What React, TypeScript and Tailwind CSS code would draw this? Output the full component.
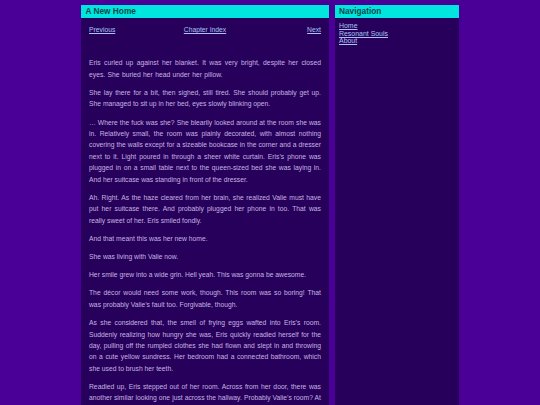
const paragraphs = [
  "Eris curled up against her blanket. It was very bright, despite her closed eyes. She buried her head under her pillow.",
  "She lay there for a bit, then sighed, still tired. She should probably get up. She managed to sit up in her bed, eyes slowly blinking open.",
  "… Where the fuck was she? She blearily looked around at the room she was in. Relatively small, the room was plainly decorated, with almost nothing covering the walls except for a sizeable bookcase in the corner and a dresser next to it. Light poured in through a sheer white curtain. Eris’s phone was plugged in on a small table next to the queen-sized bed she was laying in. And her suitcase was standing in front of the dresser.",
  "Ah. Right. As the haze cleared from her brain, she realized Valie must have put her suitcase there. And probably plugged her phone in too. That was really sweet of her. Eris smiled fondly.",
  "And that meant this was her new home.",
  "She was living with Valie now.",
  "Her smile grew into a wide grin. Hell yeah. This was gonna be awesome.",
  "The décor would need some work, though. This room was so boring! That was probably Valie’s fault too. Forgivable, though.",
  "As she considered that, the smell of frying eggs wafted into Eris’s room. Suddenly realizing how hungry she was, Eris quickly readied herself for the day, pulling off the rumpled clothes she had flown and slept in and throwing on a cute yellow sundress. Her bedroom had a connected bathroom, which she used to brush her teeth.",
  "Readied up, Eris stepped out of her room. Across from her door, there was another similar looking one just across the hallway. Probably Valie’s room? At the end of the hallway, she could hear sizzling coming from the kitchen.",
];

const navLinks = ["Home", "Resonant Souls", "About"];

export default function App() {
  return (
    <div className="h-[405px] overflow-hidden bg-[#4a0096] pt-[5px] font-['Liberation_Sans',Arial,sans-serif]">
      <div className="flex h-full items-stretch gap-[6px] pl-[81px]">
        <main className="w-[248px] bg-[#26005a]">
          <h1 className="h-[13px] bg-[#00e5de] pl-[4.5px] text-[8.3px] font-bold leading-[13px] text-[#0a4a48]">
            A New Home
          </h1>
          <div className="px-[8px] pt-[6px] text-[6.76px] leading-[11.4px] text-[#c6b4e2]">
            <div className="grid grid-cols-3 text-[#a8c4f4]">
              <a href="#" className="text-left underline">Previous</a>
              <a href="#" className="text-center underline">Chapter Index</a>
              <a href="#" className="text-right underline">Next</a>
            </div>
            <div className="mt-[22px]">
              {paragraphs.map((p, i) => (
                <p
                  key={i}
                  className={
                    i === 0
                      ? "mb-[6.8px] text-justify [word-spacing:0.5px]"
                      : "mb-[6.8px] text-justify"
                  }
                >
                  {p}
                </p>
              ))}
            </div>
          </div>
        </main>

        <aside className="w-[124px] bg-[#26005a]">
          <h2 className="h-[13px] bg-[#00e5de] pl-[4px] text-[8.3px] font-bold leading-[13px] text-[#0a4a48]">
            Navigation
          </h2>
          <ul className="pl-[4px] pt-[4px] text-[6.95px] leading-[7.6px] text-[#a8c4f4]">
            {navLinks.map((l) => (
              <li key={l}>
                <a href="#" className="underline">{l}</a>
              </li>
            ))}
          </ul>
        </aside>
      </div>
    </div>
  );
}
